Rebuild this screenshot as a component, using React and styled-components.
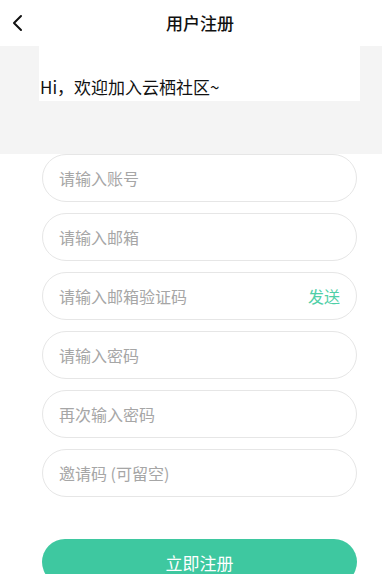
import React from "react";
import styled, { createGlobalStyle } from "styled-components";

const Global = createGlobalStyle`
  html, body { margin: 0; padding: 0; background: #fff; }
  body { font-family: "Noto Sans CJK SC", "Noto Sans", sans-serif; }
  * { box-sizing: border-box; }
`;

const Page = styled.div`
  width: 382px;
  height: 574px;
  overflow: hidden;
  background: #fff;
`;

const Header = styled.header`
  height: 46px;
  display: grid;
  grid-template-columns: 64px 1fr 46px;
  align-items: center;
  background: #fff;
`;

const Back = styled.button`
  border: 0;
  background: none;
  padding: 0 0 0 12px;
  height: 46px;
  display: flex;
  align-items: center;
  justify-content: flex-start;
  svg { display: block; }
`;

const Title = styled.h1`
  margin: 0;
  text-align: center;
  font-size: 17px;
  font-weight: 500;
  color: #111;
  line-height: 46px;
`;

const Banner = styled.section`
  height: 108px;
  background: #f4f4f4;
  padding: 0 22px 0 39px;
`;

const Welcome = styled.div`
  height: 55px;
  background: #fff;
  display: flex;
  align-items: flex-end;
  padding: 0 0 2px 1px;
  font-size: 17px;
  color: #111;
  line-height: 24px;
`;

const Form = styled.form`
  display: flex;
  flex-direction: column;
  gap: 11px;
  padding: 0 25px 0 42px;
`;

const Field = styled.div`
  height: 48px;
  border: 1px solid #e6e6e6;
  border-radius: 24px;
  display: flex;
  align-items: center;
  padding: 0 16px 0 16px;
  background: #fff;
`;

const Input = styled.input`
  flex: 1;
  min-width: 0;
  border: 0;
  outline: none;
  background: transparent;
  font-family: inherit;
  font-size: 16px;
  color: #333;
  padding: 0;
  &::placeholder { color: #a6a6a6; }
`;

const Send = styled.span`
  font-size: 16px;
  color: #4fcfa7;
`;

const Submit = styled.button`
  margin-top: 31px;
  height: 46px;
  border: 0;
  border-radius: 23px;
  background: #3ec8a0;
  color: #fff;
  font-family: inherit;
  font-size: 17px;
  padding: 0;
`;

const fields = [
  { ph: "请输入账号" },
  { ph: "请输入邮箱" },
  { ph: "请输入邮箱验证码", send: true },
  { ph: "请输入密码", type: "password" },
  { ph: "再次输入密码", type: "password" },
  { ph: "邀请码 (可留空)" },
];

export default function App() {
  return (
    <Page>
      <Global />
      <Header>
        <Back aria-label="返回">
          <svg width="12" height="18" viewBox="0 0 12 18">
            <polyline points="9,2 2,9 9,16" fill="none" stroke="#111" strokeWidth="2" strokeLinecap="round" strokeLinejoin="round" />
          </svg>
        </Back>
        <Title>用户注册</Title>
        <span />
      </Header>
      <Banner>
        <Welcome>Hi，欢迎加入云栖社区~</Welcome>
      </Banner>
      <Form onSubmit={(e) => e.preventDefault()}>
        {fields.map((f) => (
          <Field key={f.ph}>
            <Input placeholder={f.ph} type={f.type || "text"} />
            {f.send && <Send>发送</Send>}
          </Field>
        ))}
        <Submit type="submit">立即注册</Submit>
      </Form>
    </Page>
  );
}
